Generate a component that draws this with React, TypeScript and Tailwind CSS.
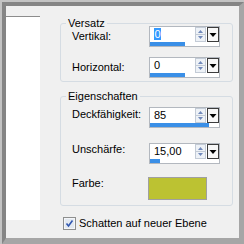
import React from 'react'

type Field = { value: string; pct: number; selected?: boolean }

function Spinner() {
  return (
    <svg width="11" height="15" viewBox="0 0 11 15" className="block shrink-0">
      <rect x="0.5" y="0.5" width="10" height="14" fill="#eef2f7" stroke="#c3cbd6" />
      <line x1="1" y1="7.5" x2="10" y2="7.5" stroke="#c3cbd6" />
      <polygon points="3,6 8,6 5.5,3" fill="#7088ba" />
      <polygon points="3,9 8,9 5.5,12" fill="#7088ba" />
    </svg>
  )
}

function DropButton() {
  return (
    <svg width="12" height="15" viewBox="0 0 12 15" className="block shrink-0 ml-[1px]">
      <rect x="0.5" y="0.5" width="11" height="14" fill="#f7f7f7" stroke="#3c3c3c" />
      <polygon points="2.5,6 9.5,6 6,10" fill="#000" />
    </svg>
  )
}

function NumField({ value, pct, selected }: Field) {
  return (
    <div className="w-[71px] h-[21px] border border-[#b3b8bf] bg-white flex flex-col">
      <div className="h-[15px] flex">
        <div className="flex-1 pl-[4px] pt-[1px] leading-[13px]">
          {selected ? <span className="bg-[#3399ff] text-white px-[0.5px]">{value}</span> : value}
        </div>
        <Spinner />
        <DropButton />
      </div>
      <div className="h-[4px] bg-white">
        <div className="h-full bg-[#3a8fe7]" style={{ width: `${pct}%` }} />
      </div>
    </div>
  )
}

function Row({ label, labelTop, children }: { label: string; labelTop: string; children: React.ReactNode }) {
  return (
    <div className="flex items-start">
      <div className={`w-[88px] pl-[11px] leading-[13px] ${labelTop}`}>{label}</div>
      {children}
    </div>
  )
}

function Group({ title, className, children }: { title: string; className: string; children: React.ReactNode }) {
  return (
    <div className={`relative border border-[#d5dce3] rounded-[3px] ${className}`}>
      <span className="absolute top-[-7px] left-[5px] px-[2px] bg-[#f0f0f0] leading-[13px]">{title}</span>
      {children}
    </div>
  )
}

export default function App() {
  return (
    <div className="w-[244px] h-[244px] bg-[#c3c3c3] pt-[2px] pl-[2px] font-['Liberation_Sans',Arial,sans-serif] text-[11px] text-black">
      <div className="w-full h-full border-t-4 border-l-4 border-r-[5px] border-b-[6px] border-t-[#858585] border-l-[#858585] border-r-[#a6a6a6] border-b-[#a6a6a6] bg-[#f0f0f0] flex">
        {/* left preview strip */}
        <div className="w-[34px] h-[204px] mt-[10px] bg-white border-t border-[#8c8c8c]" />

        <div className="w-[173px] ml-[20px] flex flex-col">
          <Group title="Versatz" className="mt-[17px] pt-[2px] pb-[3px]">
            <Row label="Vertikal:" labelTop="mt-[4px]">
              <NumField value="0" pct={51} selected />
            </Row>
            <div className="mt-[10px]">
              <Row label="Horizontal:" labelTop="mt-[4px]">
                <NumField value="0" pct={51} />
              </Row>
            </div>
          </Group>

          <Group title="Eigenschaften" className="mt-[14px] pt-[10px] pb-[5px]">
            <Row label="Deckfähigkeit:" labelTop="mt-[1px]">
              <NumField value="85" pct={86} />
            </Row>
            <div className="mt-[15px]">
              <Row label="Unschärfe:" labelTop="mt-0">
                <NumField value="15,00" pct={15} />
              </Row>
            </div>
            <div className="mt-[13px]">
              <Row label="Farbe:" labelTop="mt-0">
                <div className="w-[59px] h-[23px] ml-[-1px] border border-[#a0a0a0] bg-[#bcc232]" />
              </Row>
            </div>
          </Group>

          <label className="mt-[11px] ml-[3px] flex items-start gap-[3px] leading-[13px]">
            <span className="w-[13px] h-[13px] border border-[#8e8f8f] bg-[#f4f6f9] p-[1px] shrink-0">
              <svg width="9" height="9" viewBox="0 0 9 9" className="block">
                <rect x="0" y="0" width="9" height="9" fill="#e3e9f1" />
                <path d="M1.5 4.5 L3.5 7 L7.5 1.5" fill="none" stroke="#3157b0" strokeWidth="1.6" />
              </svg>
            </span>
            <span>Schatten auf neuer Ebene</span>
          </label>
        </div>
      </div>
    </div>
  )
}
